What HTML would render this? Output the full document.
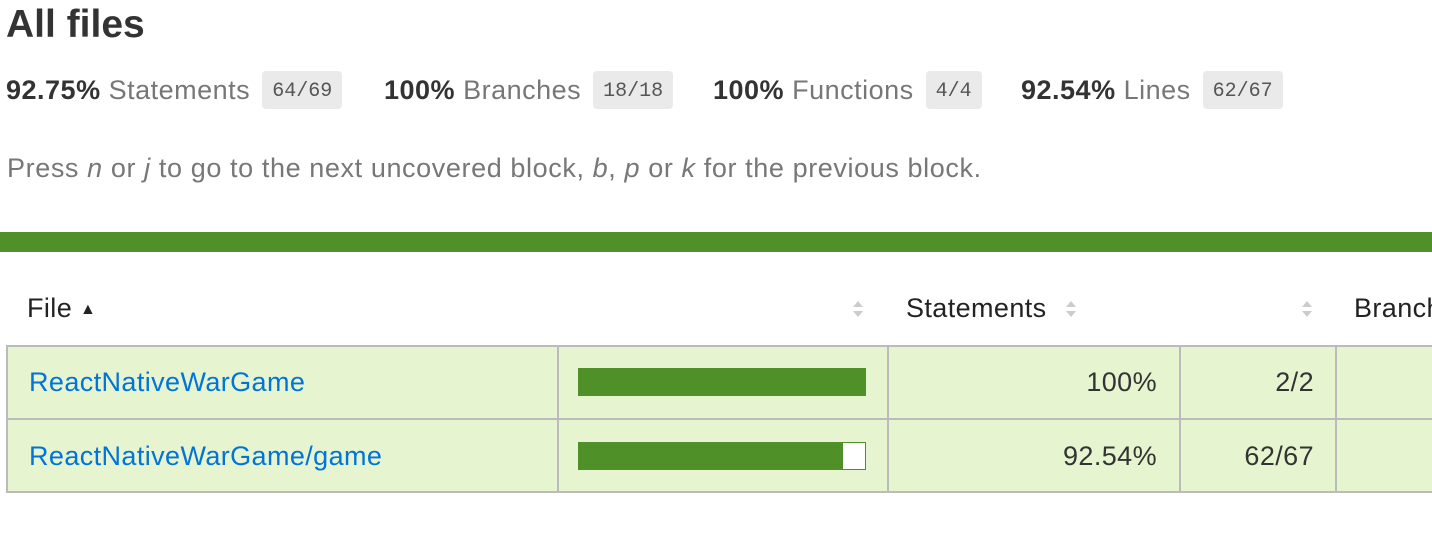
<!DOCTYPE html>
<html><head><style>
*{margin:0;padding:0;box-sizing:border-box}
body{width:1432px;height:554px;overflow:hidden;background:#fff;font-family:"Liberation Sans",Arial,sans-serif;color:#333;position:relative}
.a{position:absolute;white-space:nowrap}
h1{position:absolute;left:6px;top:3px;font-size:39px;font-weight:bold;color:#333}
.s{font-size:27px;top:73px;letter-spacing:0.5px}
.s b{color:#333}
.s span.l{color:#777}
.badge{display:inline-block;background:#eaeaea;border-radius:4px;font-family:"Liberation Mono",monospace;font-size:20px;color:#555;padding:0 10px;height:38px;line-height:42px;vertical-align:middle;position:relative;top:-2px;margin-left:4px;letter-spacing:0}
.hint{left:7px;top:153px;font-size:27px;color:#777;letter-spacing:0.6px}
.bar{left:0;top:232px;width:1432px;height:20px;background:#4f9029}
.th{font-size:27px;color:#222;top:293px;letter-spacing:0.4px}
.sort{position:absolute;top:299px;width:14px;height:20px}
.row{position:absolute;left:6px;width:1440px;height:75px;background:#e6f5d0;border:2px solid #bbb}
.cell{position:absolute;top:0;bottom:0;border-left:2px solid #bbb}
.td{font-size:27px;top:0;line-height:71px;letter-spacing:0.4px}
a{color:#0074d9;text-decoration:none}
.pb{position:absolute;left:578px;width:288px;height:28px;background:#4f9029;border:1px solid #4f9029}
</style></head><body>
<h1>All files</h1>
<div class="a s" style="left:6px"><b>92.75%</b> <span class="l">Statements</span> <span class="badge">64/69</span></div>
<div class="a s" style="left:384px"><b>100%</b> <span class="l">Branches</span> <span class="badge">18/18</span></div>
<div class="a s" style="left:713px"><b>100%</b> <span class="l">Functions</span> <span class="badge">4/4</span></div>
<div class="a s" style="left:1021px"><b>92.54%</b> <span class="l">Lines</span> <span class="badge">62/67</span></div>
<div class="a hint">Press <i>n</i> or <i>j</i> to go to the next uncovered block, <i>b</i>, <i>p</i> or <i>k</i> for the previous block.</div>
<div class="a bar"></div>
<div class="a th" style="left:27px">File <span style="font-size:16px;position:relative;top:-3px">&#9650;</span></div>
<div class="a th" style="left:906px">Statements</div>
<div class="a th" style="left:1354px">Branches</div>
<svg class="sort" style="left:851px" viewBox="0 0 14 20"><path d="M2 8L7 2L12 8Z M2 12L7 18L12 12Z" fill="#ccc"/></svg>
<svg class="sort" style="left:1064px" viewBox="0 0 14 20"><path d="M2 8L7 2L12 8Z M2 12L7 18L12 12Z" fill="#ccc"/></svg>
<svg class="sort" style="left:1300px" viewBox="0 0 14 20"><path d="M2 8L7 2L12 8Z M2 12L7 18L12 12Z" fill="#ccc"/></svg>

<div class="row" style="top:345px">
<div class="cell" style="left:549px"></div><div class="cell" style="left:879px"></div><div class="cell" style="left:1171px"></div><div class="cell" style="left:1327px"></div>
</div>
<div class="row" style="top:418px">
<div class="cell" style="left:549px"></div><div class="cell" style="left:879px"></div><div class="cell" style="left:1171px"></div><div class="cell" style="left:1327px"></div>
</div>
<div class="a td" style="left:29px;top:347px"><a>ReactNativeWarGame</a></div>
<div class="a td" style="left:29px;top:421px"><a>ReactNativeWarGame/game</a></div>
<div class="pb" style="top:368px"></div>
<div class="pb" style="top:442px"><div style="position:absolute;right:0;top:0;width:22px;height:26px;background:#fff"></div></div>
<div class="a td" style="right:275px;top:347px">100%</div>
<div class="a td" style="right:275px;top:421px">92.54%</div>
<div class="a td" style="right:118px;top:347px">2/2</div>
<div class="a td" style="right:118px;top:421px">62/67</div>
</body></html>
